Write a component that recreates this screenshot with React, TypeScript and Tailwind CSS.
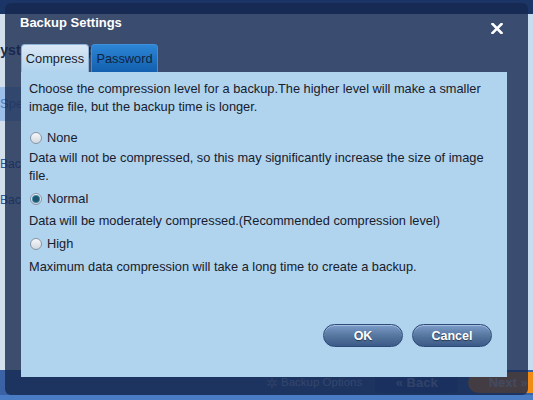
import React from 'react';

const Radio = ({ checked }: { checked?: boolean }) => (
  <span className="flex h-[12px] w-[12px] shrink-0 items-center justify-center rounded-full border border-[#8795a4] bg-gradient-to-b from-[#f6f8fa] to-[#d2d9e0]">
    {checked && <span className="h-[6px] w-[6px] rounded-full bg-[#1d5670] ring-1 ring-[#3f87a6]" />}
  </span>
);

const Option = ({ label, checked }: { label: string; checked?: boolean }) => (
  <label className="ml-[1px] flex h-[18px] items-center gap-[5px]">
    <Radio checked={checked} />
    <span>{label}</span>
  </label>
);

const PillButton = ({ children }: { children: React.ReactNode }) => (
  <button className="h-[23px] w-[80px] rounded-full border border-[#2c4a78] bg-gradient-to-b from-[#7d9dcb] via-[#56779f] to-[#3c5a88] text-[12.5px] font-bold text-white shadow-[inset_0_1px_0_rgba(255,255,255,0.35)] [text-shadow:0_1px_1px_rgba(0,0,0,0.5)]">
    {children}
  </button>
);

export default function App() {
  return (
    <div className="relative h-[400px] w-[533px] overflow-hidden bg-[#4a7bc5] font-['Liberation_Sans',Arial,sans-serif] text-[#18202c]">
      {/* app behind the dialog */}
      <div className="flex h-full flex-col">
        <div className="h-[14px] bg-[#1a3566]" />
        <div className="flex flex-1 bg-[#c8dcf0]">
          <div className="w-[120px] overflow-hidden whitespace-nowrap bg-[#d4dfec] pt-[26px]">
            <div className="-ml-[9px] text-[14px] font-bold text-[#1b2c48]">System Backup</div>
            <div className="mt-[26px] flex h-[34px] items-center bg-[#9cc0ea] text-[13px] text-[#4f7fc0]">Speed</div>
            <div className="mt-[34px] text-[12px] text-[#2d5a9a]">Backup</div>
            <div className="mt-[18px] text-[12px] text-[#2d5a9a]">Backup</div>
          </div>
          <div className="flex-1" />
        </div>
        <div className="flex h-[25px] items-center whitespace-nowrap bg-[#3a62a4] pl-[266px]">
          <span className="text-[14px] leading-none text-[#8aa0c0]">✲</span>
          <span className="ml-[3px] shrink-0 text-[11.5px] text-[#a8bde0]">Backup Options</span>
          <div className="ml-[13px] flex h-[21px] w-[83px] shrink-0 items-center justify-center rounded-[4px] bg-[#2a52a0] text-[13px] font-bold text-[#9fb0d0]">
            «&nbsp;Back
          </div>
          <div className="ml-[10px] flex h-[21px] w-[80px] shrink-0 items-center justify-center rounded-l-full bg-[#f28c14] text-[13px] font-bold text-[#f6d3a0]">
            Next&nbsp;»
          </div>
        </div>
        <div className="h-[5px] bg-[#4a7bc5]" />
      </div>

      {/* dialog */}
      <div className="absolute left-[5px] top-[3px] flex h-[392px] w-[523px] flex-col rounded-[6px] bg-[#16284f]/80">
        <div className="flex h-[41px] items-start justify-between pl-[15px] pr-[25px]">
          <h1 className="mt-[12px] text-[13px] font-bold leading-[15px] text-white">Backup Settings</h1>
          <svg className="mt-[20px]" width="12" height="11" viewBox="0 0 12 11">
            <path d="M1.5 1 L10.5 10 M10.5 1 L1.5 10" stroke="#fff" strokeWidth="2.6" strokeLinecap="square" />
          </svg>
        </div>

        <div className="ml-[16px] flex h-[28px] items-stretch gap-[2px] text-[12.8px]">
          <div className="flex w-[68px] items-center justify-center rounded-t-[4px] border border-b-0 border-[#8fb3d8] bg-gradient-to-b from-[#dbe8f6] to-[#b0d3ee]">
            Compress
          </div>
          <div className="flex w-[67px] items-center justify-center rounded-t-[4px] border border-b-0 border-[#3f8fdc] bg-gradient-to-b from-[#2d86d6] to-[#125fae] text-[#0e2442]">
            Password
          </div>
        </div>

        <div className="ml-[16px] flex h-[305px] w-[486px] flex-col bg-[#b0d3ee] px-[8px] pt-[8px] text-[12.8px] leading-[18px]">
          <p>
            Choose the compression level for a backup.The higher level will make a smaller image file, but the backup time is longer.
          </p>
          <div className="mt-[13px]">
            <Option label="None" />
          </div>
          <p className="mt-[2px]">
            Data will not be compressed, so this may significantly increase the size of image file.
          </p>
          <div className="mt-[5px]">
            <Option label="Normal" checked />
          </div>
          <p className="mt-[4px]">Data will be moderately compressed.(Recommended compression level)</p>
          <div className="mt-[5px]">
            <Option label="High" />
          </div>
          <p className="mt-[5px]">Maximum data compression will take a long time to create a backup.</p>

          <div className="mt-auto mb-[30px] mr-[7px] flex justify-end gap-[9px]">
            <PillButton>OK</PillButton>
            <PillButton>Cancel</PillButton>
          </div>
        </div>
      </div>
    </div>
  );
}
